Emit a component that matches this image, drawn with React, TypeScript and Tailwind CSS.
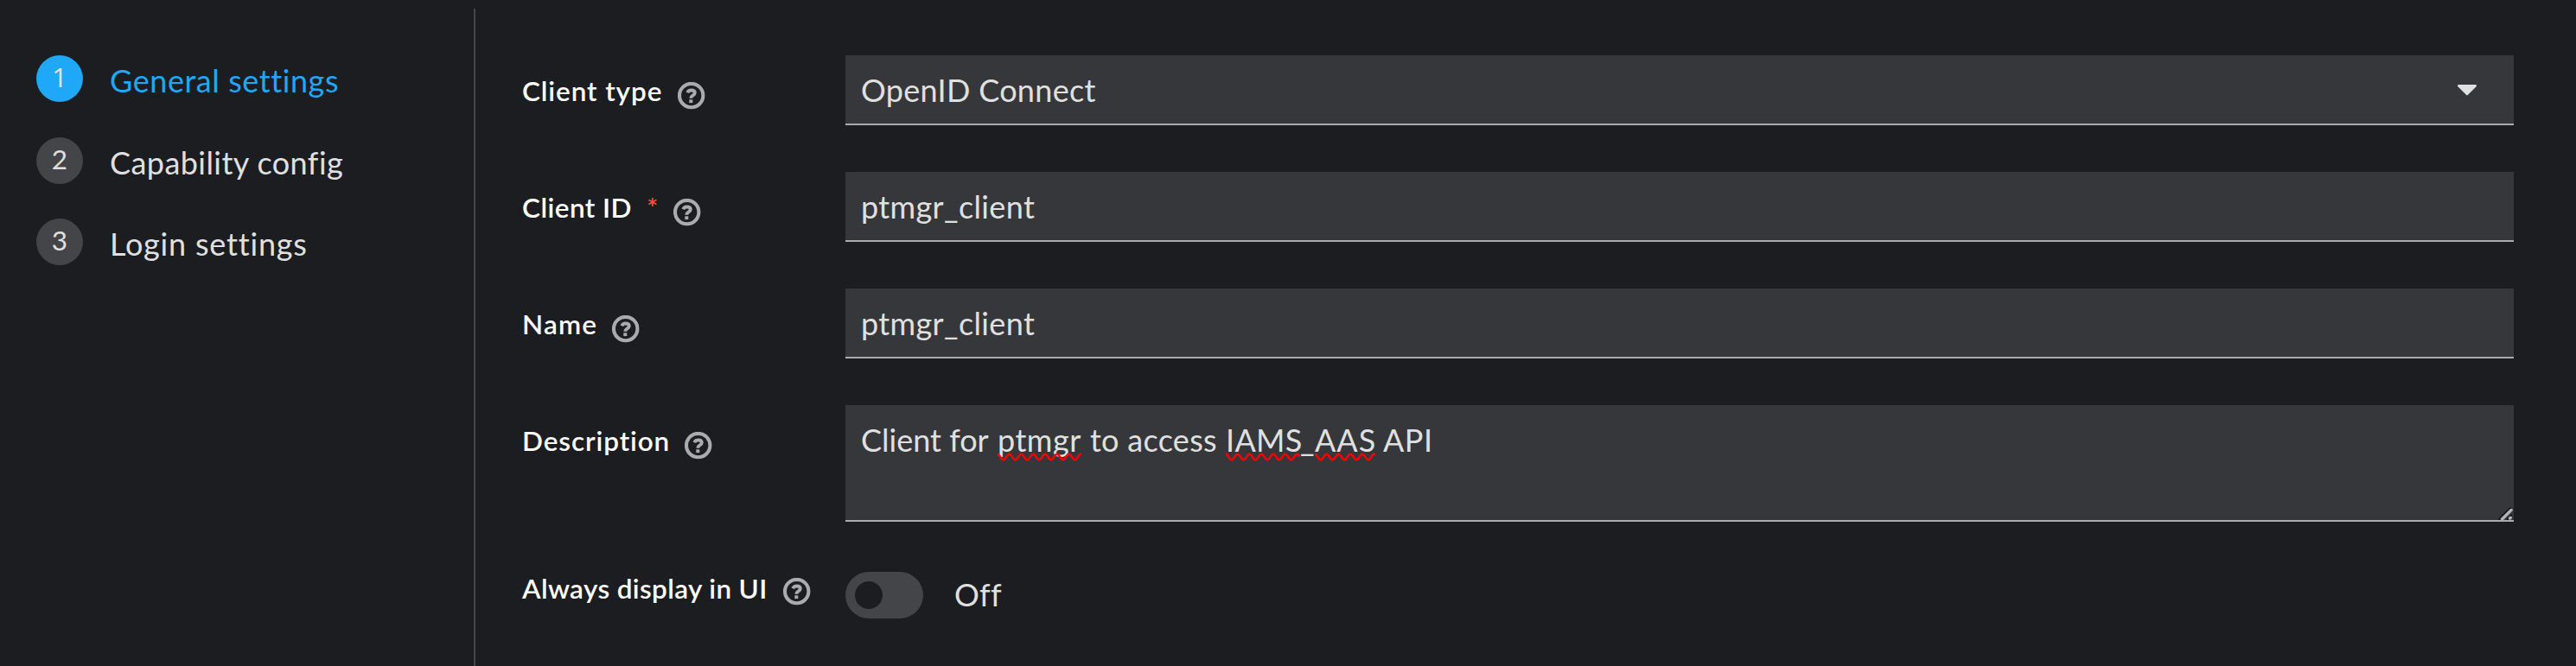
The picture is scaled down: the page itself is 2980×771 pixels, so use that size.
import type { ReactNode } from "react";

function HelpIcon() {
  return (
    <svg viewBox="0 0 32 32" className="h-8 w-8 shrink-0" fill="none" stroke="#aaabac">
      <circle cx="15.7" cy="15.6" r="13.7" strokeWidth="4.1" />
      <path d="M11.300 12.200c.8-2 2.300-2.700 4.400-2.700 2.500 0 4.100 1.200 4.100 3.100 0 3-4.500 2.800-4.500 6.100" strokeWidth="3.900" />
      <path d="M13.300 22.200h4" strokeWidth="3.800" />
    </svg>
  );
}

function Step({ n, label, active, spacing }: { n: number; label: string; active?: boolean; spacing: string }) {
  return (
    <li className="flex h-[54px] items-center">
      <span
        className={`flex h-[54px] w-[54px] shrink-0 justify-center rounded-full text-[31.5px] leading-[50px] ${
          active ? "bg-[#1fa7f8] font-['Open_Sans'] text-[#e0e0e0]" : "bg-[#444548]"
        }`}
      >
        {n}
      </span>
      <span className={`ml-[31px] pt-[4px] text-[36px] leading-[54px] ${spacing} ${active ? "text-[#1fa7f8]" : ""}`}>{label}</span>
    </li>
  );
}

function Label({ width, spacing, required, children }: { width: string; spacing: string; required?: boolean; children: ReactNode }) {
  return (
    <div className="flex h-[81px] w-[374px] shrink-0 items-center text-[31.5px] font-semibold leading-[40px] text-white">
      <span className={`${width} ${spacing} shrink-0`}>{children}</span>
      {required && <span className="w-[31px] shrink-0 font-medium text-[#fe5142]">*</span>}
      <span className="pt-[12px]">
        <HelpIcon />
      </span>
    </div>
  );
}

function Squiggle({ width }: { width: number }) {
  const points: string[] = [];
  for (let x = 0; x <= width; x += 0.5) {
    points.push(`${x},${(5 - 3.3 * Math.cos(((x + 0.2) / 13.8) * 2 * Math.PI)).toFixed(2)}`);
  }
  return (
    <svg className="absolute left-0 top-[42px] h-[10px]" width={width} viewBox={`0 0 ${width} 10`}>
      <polyline points={points.join(" ")} fill="none" stroke="#ff0000" strokeWidth="2.5" />
    </svg>
  );
}

const field = "flex w-[1930px] border-b-2 border-[#aaabac] bg-[#36373a] pl-[18px] text-[36px]";

export default function App() {
  return (
    <div className="flex h-[771px] w-[2980px] overflow-hidden bg-[#1b1d21] font-['Lato',sans-serif] text-[#e0e0e0] [font-variant-ligatures:none]">
      <nav className="mt-[10px] w-[550px] shrink-0 border-r-2 border-[#444548] pl-[42px] pt-[54px]">
        <ol className="flex flex-col gap-[40.5px]">
          <Step n={1} label="General settings" active spacing="tracking-[0.57px]" />
          <Step n={2} label="Capability config" spacing="tracking-[0.43px]" />
          <Step n={3} label="Login settings" spacing="tracking-[0.8px]" />
        </ol>
      </nav>
      <form className="flex flex-col gap-[54px] pl-[54px] pt-[64px]">
        <div className="flex">
          <Label width="w-[180px]" spacing="tracking-[0.9px]">Client type</Label>
          <div className={`${field} h-[81px] items-center justify-between pr-[42px] tracking-[0.3px]`}>
            OpenID Connect
            <svg viewBox="0 0 24 14" className="h-[14px] w-[24px]" fill="#e0e0e0">
              <path d="M2.300 1h19.400c1.200 0 1.700 1.400.9 2.200l-9.600 9.500a1.400 1.400 0 0 1-2 0L1.400 3.200C.6 2.400 1.100 1 2.300 1z" />
            </svg>
          </div>
        </div>
        <div className="flex">
          <Label width="w-[144px]" spacing="tracking-[0.45px]" required>Client ID</Label>
          <div className={`${field} h-[81px] items-center tracking-[0.36px]`}>ptmgr_client</div>
        </div>
        <div className="flex">
          <Label width="w-[104px]" spacing="tracking-[1.2px]">Name</Label>
          <div className={`${field} h-[81px] items-center tracking-[0.36px]`}>ptmgr_client</div>
        </div>
        <div className="flex">
          <Label width="w-[188px]" spacing="tracking-[0.9px]">Description</Label>
          <div className={`${field} relative h-[135px] pt-[13px] leading-[54px] whitespace-nowrap`}>
            <span className="w-[158px] shrink-0">Client for</span>
            <span className="relative w-[107px] shrink-0 tracking-[0.5px]">
              ptmgr
              <Squiggle width={97} />
            </span>
            <span className="w-[157px] shrink-0 tracking-[0.3px]">to access</span>
            <span className="relative w-[86px] shrink-0 tracking-[0.3px]">
              IAMS
              <Squiggle width={86} />
            </span>
            <span className="w-[17px] shrink-0">_</span>
            <span className="relative w-[79px] shrink-0 tracking-[1px]">
              AAS
              <Squiggle width={70} />
            </span>
            <span className="tracking-[0.5px]">API</span>
            <svg viewBox="0 0 18 16" className="absolute bottom-0 right-0 h-[16px] w-[18px]" fill="none" strokeLinecap="round">
              <path d="M1.500 15 14 2.500M11 15l4-4" stroke="#151619" strokeWidth="2.500" />
              <path d="M4.500 15 15 4.500M13.500 14l.8-.8" stroke="#b4b4b6" strokeWidth="3.400" />
            </svg>
          </div>
        </div>
        <div className="flex h-[66px] items-start pt-[4px]">
          <div className="flex h-[54px] w-[374px] shrink-0 items-center text-[31.5px] font-semibold leading-[38px] text-white">
            <span className="w-[302px] shrink-0 pb-[16px] tracking-[0.36px]">Always display in UI</span>
            <span className="pb-[8px]">
              <HelpIcon />
            </span>
          </div>
          <div className="flex h-[54px] w-[90px] shrink-0 items-center rounded-full bg-[#444548] pl-[11px]">
            <span className="h-8 w-8 rounded-full bg-[#1b1d21]" />
          </div>
          <span className="ml-[36px] text-[36px] leading-[53px] tracking-[0.3px]">Off</span>
        </div>
      </form>
    </div>
  );
}
